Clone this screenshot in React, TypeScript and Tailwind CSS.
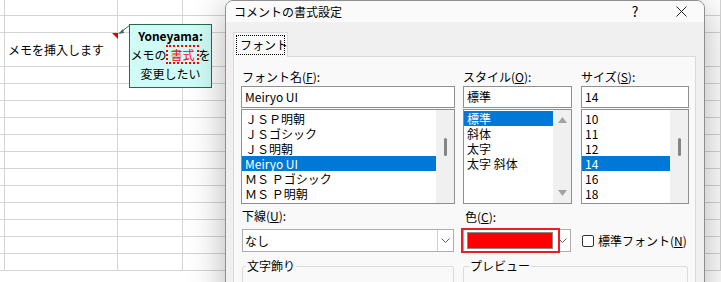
import React from 'react';

const rowHeights = [16, 17, 34, 17, 17, 17, 17, 17, 17, 17, 17, 17, 17, 17, 17];
const colWidths = ['w-[5px]', 'w-[113px]', 'w-[65px]', 'flex-1'];

const fontNames = ['ＪＳＰ明朝', 'ＪＳゴシック', 'ＪＳ明朝', 'Meiryo UI', 'ＭＳ Ｐゴシック', 'ＭＳ Ｐ明朝'];
const styles = ['標準', '斜体', '太字', '太字 斜体'];
const sizes = ['10', '11', '12', '14', '16', '18'];

const Chevron = () => (
  <svg width="9" height="5" viewBox="0 0 9 5">
    <polyline points="0.5,0.5 4.5,4.5 8.5,0.5" fill="none" stroke="#606060" strokeWidth="1" />
  </svg>
);

// Win32 style list box
const ListBox: React.FC<{
  items: string[];
  selected: number;
  width: string;
  scroll: 'thumb' | 'arrows';
}> = ({ items, selected, width, scroll }) => (
  <div className={`${width} h-[95px] mt-[1px] flex border border-[#8f8f8f] bg-white`}>
    <div className="flex-1 flex flex-col pt-[1px]">
      {items.map((it, i) => (
        <div
          key={it}
          className={`h-[15px] leading-[15px] pl-[3px] whitespace-pre overflow-hidden ${
            i === selected ? 'bg-[#0078d7] text-white' : 'text-black'
          }`}
        >
          {it}
        </div>
      ))}
    </div>
    <div className="w-[18px] bg-[#f0f0f0] flex flex-col items-center">
      {scroll === 'thumb' ? (
        <div className="mt-[28px] w-[3px] h-[18px] rounded-full bg-[#858585]" />
      ) : (
        <>
          <svg className="mt-[7px]" width="9" height="6" viewBox="0 0 9 6">
            <polygon points="0,6 4.5,0 9,6" fill="#a3a3a3" />
          </svg>
          <svg className="mt-auto mb-[7px]" width="9" height="6" viewBox="0 0 9 6">
            <polygon points="0,0 9,0 4.5,6" fill="#a3a3a3" />
          </svg>
        </>
      )}
    </div>
  </div>
);

export default function App() {
  return (
    <div className="relative w-[721px] h-[282px] overflow-hidden bg-white text-[12px] text-black font-['Noto_Sans_CJK_JP','Noto_Sans',sans-serif]">
      {/* sheet grid */}
      <div className="flex flex-col">
        {rowHeights.map((h, r) => (
          <div key={r} className="flex" style={{ height: h }}>
            {colWidths.map((w, c) => (
              <div key={c} className={`${w} border-r border-b border-[#d4d4d4] flex items-center`}>
                {r === 2 && c === 1 && <span className="pl-[3px] whitespace-nowrap">メモを挿入します</span>}
              </div>
            ))}
          </div>
        ))}
      </div>

      {/* comment indicator + arrow */}
      <svg className="absolute left-0 top-0" width="140" height="45">
        <polygon points="112,33 118,33 118,39" fill="#e00000" />
        <line x1="121" y1="32" x2="130" y2="25" stroke="#3b6e55" strokeWidth="1" />
        <polygon points="118,34 123,29 124,33" fill="#3b6e55" />
      </svg>

      {/* the note */}
      <div className="absolute left-[129px] top-[24px] w-[83px] h-[64px] border border-[#1f6e47] bg-[#cffcf6] flex flex-col items-center whitespace-nowrap leading-[19px] pt-[1px]">
        <div className="font-bold">Yoneyama:</div>
        <div className="flex items-center h-[19px]">
          メモの
          <span className="h-[19px] text-[#ff0000] border-2 border-dotted border-[#ff0000] leading-[15px] px-[2px]">書式</span>
          を
        </div>
        <div>変更したい</div>
      </div>

      {/* dialog */}
      <div className="absolute left-[225px] top-0 w-[480px] h-[300px] border border-[#8e8e8e] rounded-t-[8px] bg-[#f0f0f0] shadow-[0_8px_36px_rgba(0,0,0,0.3)] flex flex-col overflow-hidden">
        <div className="h-[28px] bg-[#fafafa] flex items-center">
          <span className="pl-[8px]">コメントの書式設定</span>
          <div className="ml-auto flex h-full">
            <div className="w-[46px] flex items-center justify-center text-[14px]">?</div>
            <div className="w-[46px] flex items-center justify-center">
              <svg width="11" height="11" viewBox="0 0 11 11">
                <path d="M0.5 0.5 L10.5 10.5 M10.5 0.5 L0.5 10.5" stroke="#222" strokeWidth="1" />
              </svg>
            </div>
          </div>
        </div>

        <div className="flex-1 flex flex-col pt-[10px] pl-[7px] pr-[8px]">
          {/* tab */}
          <div className="relative z-10 w-[55px] h-[25px] -mb-[1px] border border-b-0 border-[#d9d9d9] bg-[#f9f9f9] p-[2px]">
            <div className="h-full border border-dotted border-black flex items-center pl-[3px] leading-[14px] whitespace-nowrap">
              フォント
            </div>
          </div>

          <div className="flex-1 border border-[#d9d9d9] bg-[#f9f9f9] pt-[10px] pl-[7px]">
            {/* font / style / size */}
            <div className="flex gap-[8px]">
              <div className="flex flex-col">
                <div className="h-[19px] leading-[19px] pl-[1px]">
                  フォント名(<span className="underline">F</span>):
                </div>
                <div className="w-[214px] h-[22px] border border-[#8f8f8f] bg-white pl-[3px] leading-[20px]">Meiryo UI</div>
                <ListBox items={fontNames} selected={3} width="w-[214px]" scroll="thumb" />
              </div>
              <div className="flex flex-col">
                <div className="h-[19px] leading-[19px]">
                  スタイル(<span className="underline">O</span>):
                </div>
                <div className="w-[109px] h-[22px] border border-[#8f8f8f] bg-white pl-[3px] leading-[20px]">標準</div>
                <ListBox items={styles} selected={0} width="w-[109px]" scroll="arrows" />
              </div>
              <div className="flex flex-col ml-[1px]">
                <div className="h-[19px] leading-[19px]">
                  サイズ(<span className="underline">S</span>):
                </div>
                <div className="w-[108px] h-[22px] border border-[#8f8f8f] bg-white pl-[3px] leading-[20px]">14</div>
                <ListBox items={sizes} selected={3} width="w-[108px]" scroll="thumb" />
              </div>
            </div>

            {/* underline / colour */}
            <div className="flex mt-[2px]">
              <div className="flex flex-col w-[212px] ml-[1px]">
                <div className="h-[19px] leading-[19px]">
                  下線(<span className="underline">U</span>):
                </div>
                <div className="mt-[4px] h-[23px] flex border border-[#adadad] bg-white">
                  <span className="flex-1 pl-[2px] leading-[21px]">なし</span>
                  <div className="w-[16px] border-l border-[#d0d0d0] flex items-center justify-center">
                    <Chevron />
                  </div>
                </div>
              </div>
              <div className="flex flex-col ml-[9px]">
                <div className="h-[19px] leading-[19px] pl-[2px] pt-[1px]">
                  色(<span className="underline">C</span>):
                </div>
                <div className="mt-[4px] flex items-center">
                  <div className="relative w-[108px] h-[23px] flex border border-[#adadad] bg-white">
                    <div className="flex-1 flex items-center pl-[3px] pr-[1px]">
                      <div className="w-[86px] h-[17px] border border-[#8a8a8a] bg-[#ff0000]" />
                    </div>
                    <div className="w-[16px] flex items-center justify-center">
                      <Chevron />
                    </div>
                    <div className="absolute -left-[3px] -top-[2px] w-[99px] h-[25px] border-2 border-[#ee1c24]" />
                  </div>
                  <div className="ml-[11px] w-[12px] h-[12px] border border-[#333] rounded-[2px] bg-white" />
                  <span className="ml-[4px] whitespace-nowrap">
                    標準フォント(<span className="underline">N</span>)
                  </span>
                </div>
              </div>
            </div>

            {/* group boxes */}
            <div className="flex mt-[6px]">
              <fieldset className="w-[212px] h-[40px] ml-[1px] border border-[#dcdcdc] rounded-[2px]">
                <legend className="ml-[3px] px-[1px] leading-[16px]">文字飾り</legend>
              </fieldset>
              <fieldset className="w-[225px] h-[40px] ml-[9px] border border-[#dcdcdc] rounded-[2px]">
                <legend className="ml-[5px] px-[1px] leading-[16px]">プレビュー</legend>
              </fieldset>
            </div>
          </div>
        </div>
      </div>
    </div>
  );
}
